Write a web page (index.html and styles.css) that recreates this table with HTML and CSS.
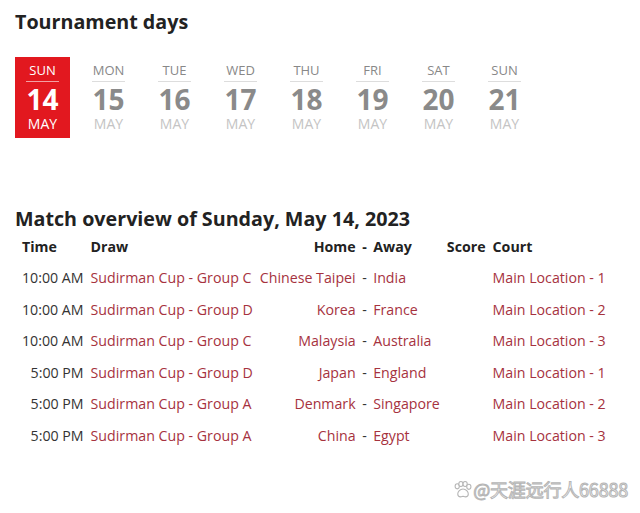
FILE: index.html
```html
<!DOCTYPE html>
<html>
<head>
<meta charset="utf-8">
<link rel="stylesheet" href="styles.css">
</head>
<body>
<h2 class="title">Tournament days</h2>
<div class="days">
  <div class="day active"><div class="dname">SUN</div><div class="dnum">14</div><div class="dmon">MAY</div></div>
  <div class="day"><div class="dname">MON</div><div class="dnum">15</div><div class="dmon">MAY</div></div>
  <div class="day"><div class="dname">TUE</div><div class="dnum">16</div><div class="dmon">MAY</div></div>
  <div class="day"><div class="dname">WED</div><div class="dnum">17</div><div class="dmon">MAY</div></div>
  <div class="day"><div class="dname">THU</div><div class="dnum">18</div><div class="dmon">MAY</div></div>
  <div class="day"><div class="dname">FRI</div><div class="dnum">19</div><div class="dmon">MAY</div></div>
  <div class="day"><div class="dname">SAT</div><div class="dnum">20</div><div class="dmon">MAY</div></div>
  <div class="day"><div class="dname">SUN</div><div class="dnum">21</div><div class="dmon">MAY</div></div>
</div>
<h2 class="title overview">Match overview of Sunday, May 14, 2023</h2>
<table class="matches">
  <thead>
    <tr><th class="c-time">Time</th><th class="c-draw">Draw</th><th class="c-home">Home</th><th class="c-sep">-</th><th class="c-away">Away</th><th class="c-score">Score</th><th class="c-court">Court</th></tr>
  </thead>
  <tbody>
    <tr><td class="c-time">10:00 AM</td><td class="c-draw link">Sudirman Cup - Group C</td><td class="c-home link">Chinese Taipei</td><td class="c-sep">-</td><td class="c-away link">India</td><td class="c-score"></td><td class="c-court link">Main Location - 1</td></tr>
    <tr><td class="c-time">10:00 AM</td><td class="c-draw link">Sudirman Cup - Group D</td><td class="c-home link">Korea</td><td class="c-sep">-</td><td class="c-away link">France</td><td class="c-score"></td><td class="c-court link">Main Location - 2</td></tr>
    <tr><td class="c-time">10:00 AM</td><td class="c-draw link">Sudirman Cup - Group C</td><td class="c-home link">Malaysia</td><td class="c-sep">-</td><td class="c-away link">Australia</td><td class="c-score"></td><td class="c-court link">Main Location - 3</td></tr>
    <tr><td class="c-time">5:00 PM</td><td class="c-draw link">Sudirman Cup - Group D</td><td class="c-home link">Japan</td><td class="c-sep">-</td><td class="c-away link">England</td><td class="c-score"></td><td class="c-court link">Main Location - 1</td></tr>
    <tr><td class="c-time">5:00 PM</td><td class="c-draw link">Sudirman Cup - Group A</td><td class="c-home link">Denmark</td><td class="c-sep">-</td><td class="c-away link">Singapore</td><td class="c-score"></td><td class="c-court link">Main Location - 2</td></tr>
    <tr><td class="c-time">5:00 PM</td><td class="c-draw link">Sudirman Cup - Group A</td><td class="c-home link">China</td><td class="c-sep">-</td><td class="c-away link">Egypt</td><td class="c-score"></td><td class="c-court link">Main Location - 3</td></tr>
  </tbody>
</table>
<div class="watermark">
  <svg class="paw" width="19" height="17" viewBox="0 0 18 16"><g fill="#fff" stroke="#b5b5b5" stroke-width="1"><ellipse cx="4" cy="5" rx="2" ry="2.4"/><ellipse cx="7.5" cy="2.8" rx="2" ry="2.3"/><ellipse cx="11.5" cy="2.8" rx="2" ry="2.3"/><ellipse cx="15" cy="5.5" rx="2" ry="2.4"/><path d="M9.5 7.5c2.8 0 5 2.6 5 4.8 0 2-1.6 2.7-2.8 2.7-1 0-1.4-.5-2.2-.5s-1.2.5-2.2.5c-1.2 0-2.8-.7-2.8-2.7 0-2.2 2.2-4.8 5-4.8z"/></g></svg>
  <span class="wm-text">@天涯远行人66888</span>
</div>
</body>
</html>
```
FILE: styles.css
```css
html, body {
  margin: 0;
  background: #fff;
}
body {
  padding: 10px 15px 0;
  font-family: "Open Sans", "Noto Sans", sans-serif;
  color: #333;
  position: relative;
  height: 513px;
  box-sizing: border-box;
}
.title {
  margin: 0;
  font-size: 19.7px;
  line-height: 24px;
  font-weight: 700;
  color: #222;
}
.days {
  display: flex;
  gap: 11px;
  margin-top: 23px;
}
.day {
  width: 55px;
  box-sizing: border-box;
  padding: 4px 0 5px;
  display: flex;
  flex-direction: column;
  align-items: center;
}
.dname {
  width: 33px;
  text-align: center;
  font-size: 13px;
  line-height: 18px;
  padding-bottom: 2px;
  border-bottom: 1px solid #ddd;
  color: #888;
}
.dnum {
  margin-top: 4px;
  font-size: 28px;
  line-height: 26px;
  font-weight: 700;
  color: #8a8a8a;
}
.dmon {
  margin-top: 3px;
  font-size: 14px;
  line-height: 18px;
  color: #c4c4c4;
}
.day.active {
  background: #e2181f;
}
.day.active .dname {
  color: #fff;
  border-bottom-color: #f3a0a3;
}
.day.active .dnum,
.day.active .dmon {
  color: #fff;
}
.overview {
  margin-top: 69px;
}
.matches {
  border-collapse: collapse;
  margin-left: 3.5px;
  font-size: 14.2px;
  line-height: 20px;
}
.matches th,
.matches td {
  padding: 5.75px 3.5px;
  white-space: nowrap;
  text-align: left;
}
.matches th {
  font-weight: 700;
  color: #222;
}
.matches td.c-time {
  text-align: right;
  color: #333;
}
.matches .c-home {
  text-align: right;
}
.matches td.c-home {
  text-align: right;
}
.matches .c-sep {
  padding-left: 3px;
  padding-right: 3px;
}
.matches td.c-sep {
  color: #333;
}
.link {
  color: #a6323e;
}
.watermark {
  position: absolute;
  right: 12px;
  bottom: 13px;
  display: flex;
  align-items: center;
  gap: 1px;
}
.wm-text {
  font-family: "Noto Sans CJK SC", "Noto Sans", sans-serif;
  font-size: 18px;
  line-height: 22px;
  color: #fff;
  -webkit-text-stroke: 1px #b5b5b5;
  letter-spacing: -0.2px;
}
```
